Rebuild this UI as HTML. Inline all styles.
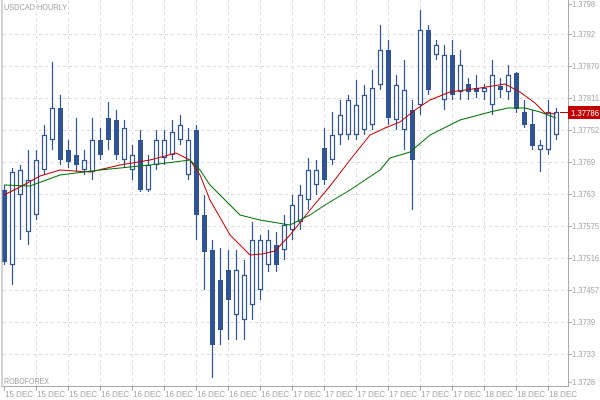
<!DOCTYPE html>
<html><head><meta charset="utf-8"><style>
html,body{margin:0;padding:0;background:#fff;width:600px;height:400px;overflow:hidden}
svg text{font-family:"Liberation Sans",sans-serif;font-size:8px;fill:#a0a0a0}
</style></head><body>
<svg id="s" width="600" height="400" viewBox="0 0 600 400" xmlns="http://www.w3.org/2000/svg">
<rect width="600" height="400" fill="#fff"/>
<g id="grid" stroke="#dcdcdc" stroke-width="1" stroke-dasharray="3,3"></g>
<g id="c"></g>
<polyline fill="none" stroke="#c00000" stroke-width="1" points="4,195 20,187 40,176 60,170 90,172 120,165 150,160 176,153 190,160 200,175 210,200 230,235 250,255 262,254 275,251 290,235 310,210 330,186 350,160 370,135 385,128 400,122 415,110 430,100 450,92 480,88 505,84 520,92 535,103 545,113 556,114"/>
<polyline fill="none" stroke="#007000" stroke-width="1" points="4,185 30,186 60,175 100,170 150,165 190,160 200,170 210,185 225,200 240,215 260,220 290,225 310,215 325,205 350,190 380,170 390,158 410,152 430,135 460,120 490,112 508,108 525,108 540,112 556,118"/>
<line x1="2" y1="0" x2="2" y2="387" stroke="#aaa"/>
<line x1="2" y1="386.5" x2="569" y2="386.5" stroke="#aaa"/>
<line x1="568.5" y1="0" x2="568.5" y2="387" stroke="#aaa"/>
<g id="ax"></g>
<text x="4" y="10" textLength="63" lengthAdjust="spacingAndGlyphs">USDCAD HOURLY</text>
<text x="4" y="384" textLength="45" lengthAdjust="spacingAndGlyphs">ROBOFOREX</text>
<rect x="568" y="106" width="32" height="13" fill="#c00000"/>
<line x1="560" y1="112.5" x2="568" y2="112.5" stroke="#c00000"/>
<text x="571" y="116" style="fill:#fff" textLength="28" lengthAdjust="spacingAndGlyphs">1.37786</text>
</svg>
<script>
var NS="http://www.w3.org/2000/svg";
function el(p,t,a,txt){var e=document.createElementNS(NS,t);for(var k in a)e.setAttribute(k,a[k]);if(txt)e.textContent=txt;document.getElementById(p).appendChild(e);return e;}
var hs=[34,66,98,130,162,194,226,258,290,322,354];
hs.forEach(function(y){el("grid","line",{x1:3,y1:y+.5,x2:568,y2:y+.5});});
for(var x=36;x<568;x+=32)el("grid","line",{x1:x+.5,y1:0,x2:x+.5,y2:386});
var labs=[["1.3798",4],["1.3792",34],["1.37870",66],["1.37811",98],["1.37752",130],["1.3769",162],["1.3763",194],["1.37575",226],["1.37516",258],["1.37457",290],["1.3739",322],["1.3733",354],["1.3728",382]];
labs.forEach(function(l){el("ax","line",{x1:568,y1:l[1]+.5,x2:572,y2:l[1]+.5,stroke:"#aaa"});el("ax","text",{x:572,y:l[1]+3,textLength:(l[0].length==7?27:23),lengthAdjust:"spacingAndGlyphs"},l[0]);});
var d=["15","15","15","16","16","16","16","16","16","17","17","17","17","17","17","18","18","18"];
d.forEach(function(v,i){var x=4+32*i;el("ax","line",{x1:x+.5,y1:386,x2:x+.5,y2:391,stroke:"#aaa"});el("ax","text",{x:x+1,y:397,textLength:28,lengthAdjust:"spacingAndGlyphs"},v+" DEC");});
var C=[[4,185,265,190,262,1],[12,168,285,172,265,0],[20,165,240,170,195,0],[28,150,245,180,232,0],[36,150,220,160,215,0],[44,125,175,135,170,0],[52,62,150,108,140,0],[60,95,165,108,160,1],[68,140,168,150,162,1],[76,118,172,155,165,1],[84,150,175,160,170,0],[92,118,180,140,172,0],[100,128,160,140,155,1],[108,102,150,118,140,1],[116,110,160,120,155,1],[124,120,168,128,160,0],[132,145,180,155,170,0],[140,130,192,140,190,1],[148,155,192,165,190,0],[156,130,170,140,165,0],[164,130,165,140,158,0],[172,120,160,132,155,0],[180,115,145,125,140,0],[188,128,180,140,175,0],[196,125,240,130,215,1],[204,195,290,215,252,1],[212,240,378,250,345,1],[220,248,345,280,330,1],[228,250,340,270,300,1],[236,250,340,270,315,0],[244,260,340,275,320,0],[252,222,320,240,305,0],[260,235,300,240,290,0],[268,230,272,240,265,0],[276,232,272,245,265,1],[284,215,260,225,250,0],[292,195,240,205,230,0],[300,185,230,195,222,0],[308,158,210,170,200,0],[316,160,195,170,185,0],[324,128,185,148,180,1],[332,112,165,135,160,0],[340,100,145,115,135,0],[348,95,140,100,135,0],[356,80,140,105,135,0],[364,85,135,95,130,0],[372,70,130,88,125,0],[380,25,90,50,85,0],[388,40,125,50,118,1],[396,75,130,85,120,0],[404,60,150,90,130,0],[412,100,210,110,160,1],[420,10,115,30,105,0],[428,25,95,30,90,1],[436,40,60,45,55,0],[444,45,110,55,100,0],[452,40,100,55,95,1],[460,50,100,65,92,0],[468,78,100,84,92,1],[476,75,98,88,92,1],[484,84,100,88,92,0],[492,60,115,75,105,0],[500,78,98,86,90,1],[508,65,100,75,92,0],[516,72,113,73,109,1],[524,100,128,112,125,1],[532,110,150,124,146,1],[540,140,172,145,150,0],[548,100,155,112,150,0],[556,108,140,112,135,0]];
C.forEach(function(c){var col="#2f5597";el("c","line",{x1:c[0]+.5,y1:c[1],x2:c[0]+.5,y2:c[2],stroke:col,"stroke-width":1.2});
if(c[5])el("c","rect",{x:c[0]-2,y:c[3],width:5,height:c[4]-c[3],fill:col});
else el("c","rect",{x:c[0]-1.5,y:c[3]+.5,width:4,height:Math.max(1,c[4]-c[3]-1),fill:"#fff",stroke:col,"stroke-width":1.2});});
</script>
</body></html>
